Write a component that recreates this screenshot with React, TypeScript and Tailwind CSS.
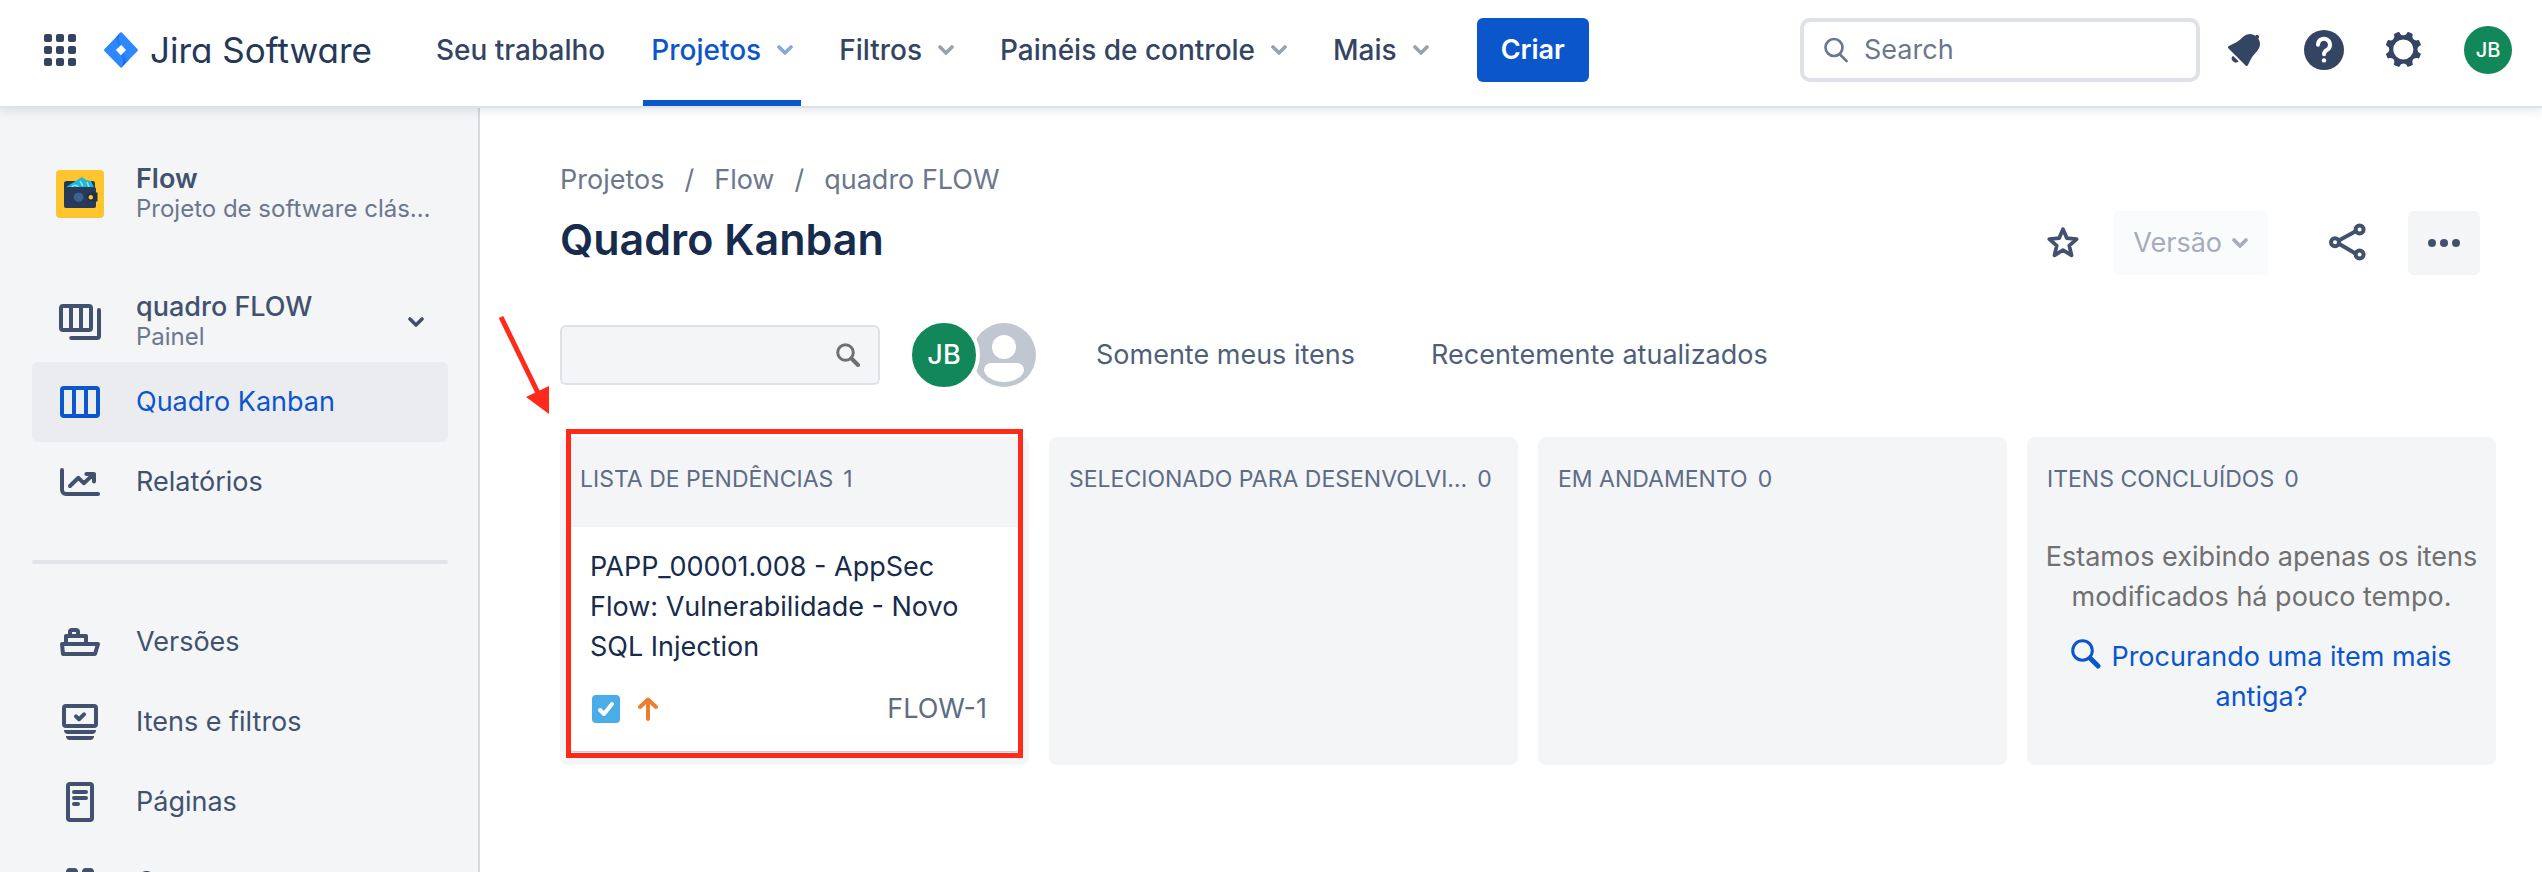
import type { ReactNode } from 'react';

const Svg = ({ children, className = 'size-12', box = '0 0 24 24' }: { children: ReactNode; className?: string; box?: string }) => (
  <svg viewBox={box} className={`shrink-0 ${className}`} fill="none" stroke="currentColor" strokeWidth={2} strokeLinecap="round" strokeLinejoin="round" aria-hidden="true">
    {children}
  </svg>
);

const Chevron = ({ className }: { className: string }) => (
  <Svg box="0 0 16 10" className={className}>
    <path d="M2 2l6 6 6-6" strokeWidth={3.6} />
  </Svg>
);

const AppGrid = () => (
  <svg viewBox="0 0 32 32" className="size-8" fill="currentColor" aria-hidden="true">
    {[0, 12, 24].map((y) => [0, 12, 24].map((x) => <rect key={`${x}-${y}`} x={x} y={y} width="8" height="8" rx="2" />))}
  </svg>
);

const JiraLogo = () => (
  <svg viewBox="0 0 34 36" className="h-9 w-[34px]" aria-hidden="true">
    <defs>
      <linearGradient id="jira-a" x1="0.9" y1="0.1" x2="0.4" y2="0.7">
        <stop offset="0.1" stopColor="#0f56cf" />
        <stop offset="1" stopColor="#2684ff" />
      </linearGradient>
      <linearGradient id="jira-b" x1="0.1" y1="0.9" x2="0.6" y2="0.3">
        <stop offset="0.1" stopColor="#0f56cf" />
        <stop offset="1" stopColor="#2684ff" />
      </linearGradient>
    </defs>
    <path fill="#2e87ff" d="M33.3 16.9L18.3.9 17 0 .6 16.9a1.6 1.6 0 0 0 0 2.3L17 36l16.3-16.8a1.6 1.6 0 0 0 0-2.3zM17 23.4L11.9 18 17 12.7l5.1 5.3z" />
    <path fill="url(#jira-a)" d="M17 12.7A9.4 9.4 0 0 1 17 0L11 6.500l3 9.300z" />
    <path fill="url(#jira-b)" d="M20 20.200L17 23.4a9.4 9.4 0 0 1 0 12.6l7.500-7.700z" />
  </svg>
);

const Bell = () => (
  <svg viewBox="0 0 24 24" className="size-12" fill="currentColor" aria-hidden="true">
    <path d="M6.485 17.669a2 2 0 002.829 0l-2.829-2.83a2 2 0 000 2.83zm4.897-12.191l-.725.725c-.782.782-2.21 1.813-3.206 2.311l-3.017 1.509c-.495.248-.584.774-.187 1.171l8.556 8.556c.398.396.922.313 1.171-.188l1.51-3.016c.494-.988 1.526-2.42 2.311-3.206l.725-.726a5.048 5.048 0 00.64-6.356 1.01 1.01 0 10-1.354-1.494c-.023.025-.046.049-.066.075a5.043 5.043 0 00-2.788-.84 5.036 5.036 0 00-3.57 1.478z" />
  </svg>
);

const Help = () => (
  <svg viewBox="0 0 24 24" className="size-12" fill="none" aria-hidden="true">
    <circle cx="12" cy="12" r="10" fill="currentColor" />
    <path d="M9 9.4a3 3 0 1 1 4.6 2.5c-1 .6-1.6 1-1.6 2.2" stroke="#fff" strokeWidth="2" strokeLinecap="round" />
    <circle cx="12" cy="17.2" r="1.1" fill="#fff" />
  </svg>
);

const Gear = () => (
  <svg viewBox="0 0 24 24" className="size-12" fill="currentColor" aria-hidden="true">
    <path d="M11.701 16.7a5.002 5.002 0 110-10.003 5.002 5.002 0 010 10.004m8.368-3.117a1.995 1.995 0 01-1.346-1.885c0-.876.563-1.613 1.345-1.885a.48.48 0 00.315-.574 8.947 8.947 0 00-.836-1.993.477.477 0 00-.598-.195 2.04 2.04 0 01-1.29.08 1.988 1.988 0 01-1.404-1.395 2.04 2.04 0 01.076-1.297.478.478 0 00-.196-.597 8.98 8.98 0 00-1.975-.826.479.479 0 00-.574.314 1.995 1.995 0 01-1.885 1.346 1.994 1.994 0 01-1.884-1.345.482.482 0 00-.575-.315c-.708.2-1.379.485-2.004.842a.47.47 0 00-.198.582A2.002 2.002 0 014.445 7.06a.478.478 0 00-.595.196 8.946 8.946 0 00-.833 1.994.48.48 0 00.308.572 1.995 1.995 0 011.323 1.877c0 .867-.552 1.599-1.324 1.877a.479.479 0 00-.308.57 8.99 8.99 0 00.723 1.79.477.477 0 00.624.194c.595-.273 1.343-.264 2.104.238.117.077.225.185.302.3.527.8.512 1.58.198 2.188a.473.473 0 00.168.628 8.946 8.946 0 002.11.897.474.474 0 00.57-.313 1.995 1.995 0 011.886-1.353c.878 0 1.618.567 1.887 1.353a.475.475 0 00.57.313 8.964 8.964 0 002.084-.883.473.473 0 00.167-.631c-.318-.608-.337-1.393.191-2.195.077-.116.185-.225.302-.302.772-.511 1.527-.513 2.125-.23a.477.477 0 00.628-.19 8.925 8.925 0 00.728-1.793.478.478 0 00-.314-.573" />
  </svg>
);

const Wallet = () => (
  <svg viewBox="0 0 48 48" className="size-12 shrink-0" aria-hidden="true">
    <rect width="48" height="48" rx="4" fill="#ffc42e" />
    <rect x="8" y="11" width="31" height="14" rx="2.5" fill="#1d3a4f" />
    <path d="M10 17l16-10 4 3 5 1 3 6v3H10z" fill="#1fb6d8" />
    <path d="M16 17a3.4 3.4 0 0 1 6 0M24 11l3 5M31 12l2 5" stroke="#8fe0ee" strokeWidth="1.6" fill="none" />
    <path d="M8 16l2 1h28a2 2 0 0 1 2 2v17a2 2 0 0 1-2 2H10a2 2 0 0 1-2-2z" fill="#283a57" />
    <circle cx="22.6" cy="27.2" r="4.8" fill="#3b6191" />
    <path d="M35 22.600h6.500v9H35a4.500 4.500 0 0 1 0-9z" fill="#1b3049" />
    <circle cx="34.800" cy="27.200" r="2.200" fill="#ffc42e" />
  </svg>
);

const Boards = () => (
  <Svg>
    <rect x="2.5" y="4" width="15" height="12" rx="1" />
    <path d="M7.500 4v12M12.500 4v12" strokeLinecap="butt" />
    <path d="M21.500 6v13a1 1 0 0 1-1 1H7.600" />
  </Svg>
);
const Board = () => (
  <Svg>
    <rect x="3" y="5" width="18" height="14" rx="1" />
    <path d="M9 5v14M15 5v14" strokeLinecap="butt" />
  </Svg>
);
const Report = () => (
  <Svg>
    <path d="M3 6v10a2 2 0 0 0 2 2h16" />
    <path d="M7 14l4.200-4.100 2.700 2.700 4.800-4.400M15.200 8h3.800v3.800" />
  </Svg>
);
const Ship = () => (
  <Svg>
    <path d="M3 13h18l-1.500 5H3.500z" />
    <path d="M5 13V9h10v4M7 9V7a1 1 0 0 1 1-1h2a1 1 0 0 1 1 1v2" />
  </Svg>
);
const Issues = () => (
  <Svg>
    <rect x="4" y="4" width="16" height="10" rx="1" />
    <path d="M10 9.200l1.500 1.400L14 8.200" />
    <path d="M4 16h16a2 2 0 0 1-2 2H6a2 2 0 0 1-2-2zM5 19h14a2 2 0 0 1-2 2H7a2 2 0 0 1-2-2z" fill="currentColor" stroke="none" />
  </Svg>
);
const Page = () => (
  <Svg>
    <rect x="6" y="3" width="12" height="18" rx="1" />
    <path d="M9 7h6M9 10h6M9 13h2" />
  </Svg>
);
const Components = () => (
  <Svg>
    <rect x="6" y="6" width="4" height="4" rx="1" />
    <rect x="14" y="6" width="4" height="4" rx="1" />
    <rect x="6" y="14" width="4" height="4" rx="1" />
    <rect x="14" y="14" width="4" height="4" rx="1" />
  </Svg>
);

const menus = [
  { label: 'Seu trabalho', menu: false, active: false },
  { label: 'Projetos', menu: true, active: true },
  { label: 'Filtros', menu: true, active: false },
  { label: 'Painéis de controle', menu: true, active: false },
  { label: 'Mais', menu: true, active: false },
];

function Header() {
  return (
    <header className="z-10 flex h-[106px] shrink-0 items-center bg-white pl-11 pr-[30px] text-[#344563] shadow-[0_2px_0_#dfe1e8,0_4px_10px_rgba(9,30,66,0.12)]">
      <button type="button" aria-label="Alternar aplicativo" className="mb-1.5"><AppGrid /></button>
      <a href="#" className="mb-1.5 ml-7 flex items-center gap-3 text-[35px] leading-[48px] text-[#253858] [font-feature-settings:'cv11']">
        <JiraLogo />
        Jira Software
      </a>
      <nav className="ml-14 flex h-full items-stretch gap-[30px] whitespace-nowrap text-[28px] font-medium">
        {menus.map((m) => (
          <button
            key={m.label}
            type="button"
            className={`flex items-center gap-4 border-b-[6px] px-2 ${m.active ? 'border-[#0c56cc] text-[#0c56cc]' : 'border-transparent'}`}
          >
            {m.label}
            {m.menu && <Chevron className="h-2.5 w-4 opacity-50" />}
          </button>
        ))}
      </nav>
      <button type="button" className="mb-1.5 ml-10 h-16 rounded-md bg-[#0c56cc] px-6 text-[27px] font-semibold text-white">Criar</button>
      <label className="mb-1.5 ml-auto flex h-16 w-[400px] items-center gap-4 rounded-[10px] border-4 border-[#dfe1e8] px-5 text-[#6b778c]">
        <Svg className="h-[26px] w-6" box="0 0 24 26">
          <circle cx="10" cy="10.500" r="8.500" strokeWidth={2.600} />
          <path d="M16 17.500l6.500 6.500" strokeWidth={2.600} />
        </Svg>
        <input type="search" aria-label="Search" placeholder="Search" className="w-full min-w-0 bg-transparent text-[27px] outline-none placeholder:text-[#6b778c]" />
      </label>
      <div className="mb-1.5 ml-5 flex items-center gap-8">
        <button type="button" aria-label="Notificações"><Bell /></button>
        <button type="button" aria-label="Ajuda"><Help /></button>
        <button type="button" aria-label="Configurações"><Gear /></button>
      </div>
      <button type="button" className="mb-1.5 ml-9 size-12 rounded-full bg-[#12875a] text-xl font-medium text-white">JB</button>
    </header>
  );
}

function NavItem({ icon, label, active = false }: { icon: ReactNode; label: string; active?: boolean }) {
  return (
    <a href="#" className={`flex h-20 shrink-0 items-center gap-8 rounded-md px-6 text-[27px] ${active ? 'bg-[#ebecf0] text-[#0c56cc]' : ''}`}>
      {icon}
      {label}
    </a>
  );
}

function Sidebar() {
  return (
    <aside className="flex w-[480px] shrink-0 flex-col overflow-hidden border-r-2 border-[#d8dade] bg-[#f4f5f7] pl-8 pr-[30px] pt-12 text-[#42526e]">
      <div className="flex h-20 shrink-0 items-center gap-8 px-6">
        <Wallet />
        <div className="min-w-0 flex-1 leading-[30px]">
          <h2 className="text-[27px] font-semibold">Flow</h2>
          <p className="whitespace-nowrap text-[24px] leading-[30px] text-[#6b778c]">Projeto de software clás…</p>
        </div>
      </div>
      <button type="button" className="mt-12 flex h-20 shrink-0 items-center gap-8 px-6 text-left">
        <Boards />
        <span className="flex flex-1 flex-col leading-[30px]">
          <span className="text-[27px] font-medium">quadro FLOW</span>
          <span className="text-[24px] leading-[30px] text-[#6b778c]">Painel</span>
        </span>
        <Chevron className="h-2.5 w-4" />
      </button>
      <NavItem icon={<Board />} label="Quadro Kanban" active />
      <NavItem icon={<Report />} label="Relatórios" />
      <hr className="my-[38px] h-1 shrink-0 rounded-sm border-0 bg-[#e2e4ea]" />
      <NavItem icon={<Ship />} label="Versões" />
      <NavItem icon={<Issues />} label="Itens e filtros" />
      <NavItem icon={<Page />} label="Páginas" />
      <NavItem icon={<Components />} label="Componentes" />
    </aside>
  );
}

function Column({ title, count, children }: { title: string; count: number; children?: ReactNode }) {
  return (
    <section className="relative min-w-0 rounded-lg bg-[#f4f5f7] px-2.5 pb-3">
      <h2 className="flex h-[90px] items-center gap-2.5 px-2.5 pb-1.5 text-[23px] text-[#5e6c84]">
        <span className="truncate">{title}</span>
        <span>{count}</span>
      </h2>
      {children}
    </section>
  );
}

export default function App() {
  return (
    <div className="flex h-screen flex-col overflow-hidden bg-white font-['Inter','Liberation_Sans',sans-serif]">
      <Header />
      <div className="flex min-h-0 flex-1">
        <Sidebar />
        <main className="min-w-0 flex-1 pl-20 pr-[46px] pt-[54px]">
          <nav aria-label="Trilha" className="flex gap-5 text-[27px] leading-10 text-[#6b778c]">
            <a href="#">Projetos</a>
            <span>/</span>
            <a href="#">Flow</a>
            <span>/</span>
            <a href="#">quadro FLOW</a>
          </nav>
          <div className="mr-4 mt-[11px] flex h-16 items-center text-[#42526e]">
            <h1 className="mb-2 flex-1 text-[43px] font-semibold leading-[56px] text-[#172b4d]">Quadro Kanban</h1>
            <button type="button" aria-label="Favoritar">
              <Svg className="size-9">
                <path d="M12 2.800l2.600 6 6.500.6-4.900 4.300 1.500 6.500L12 16.800l-5.700 3.400 1.500-6.500L2.900 9.400l6.500-.6z" strokeWidth={2.500} />
              </Svg>
            </button>
            <button type="button" disabled className="ml-8 flex h-16 items-center gap-2.5 rounded-md bg-[#fafbfc] px-5 text-[27px] text-[#a5adba]">
              Versão
              <Chevron className="h-2.5 w-4" />
            </button>
            <button type="button" aria-label="Compartilhar" className="ml-14">
              <Svg>
                <path d="M6 11.500L17 5.500M6 11.500L17 18" />
                <g fill="#fff">
                  <circle cx="5.500" cy="11.600" r="2" />
                  <circle cx="17.800" cy="5.300" r="2" />
                  <circle cx="17.800" cy="17.800" r="2" />
                </g>
              </Svg>
            </button>
            <button type="button" aria-label="Mais ações" className="ml-9 flex h-16 w-[72px] items-center justify-center rounded-md bg-[#f4f5f7]">
              <svg viewBox="0 0 32 8" className="h-2 w-8" fill="currentColor" aria-hidden="true">
                <circle cx="4" cy="4" r="4" />
                <circle cx="16" cy="4" r="4" />
                <circle cx="28" cy="4" r="4" />
              </svg>
            </button>
          </div>
          <div className="mt-12 flex items-center text-[27px] text-[#505f79]">
            <label className="flex h-[60px] w-80 items-center rounded-md border-2 border-[#dfe1e6] bg-[#f4f5f7] pl-3 pr-[18px] text-[#707070]">
              <input type="text" aria-label="Filtrar quadro" className="w-full min-w-0 bg-transparent outline-none" />
              <Svg className="size-6">
                <circle cx="9.500" cy="9.500" r="7.800" strokeWidth={3} />
                <path d="M15.500 15.500l6.500 6.500" strokeWidth={4} />
              </Svg>
            </label>
            <div className="ml-7 flex items-center">
              <button type="button" className="z-[1] -my-1 size-[72px] rounded-full border-4 border-white bg-[#12875a] font-medium text-white">JB</button>
              <button type="button" aria-label="Sem responsável" className="-ml-2">
                <svg viewBox="0 0 64 64" className="size-16" aria-hidden="true">
                  <circle cx="32" cy="32" r="32" fill="#c1c7d0" />
                  <circle cx="32" cy="24" r="12" fill="#fff" />
                  <path d="M19 40h26a7 7 0 0 1 7 7c0 5.500-9 12-20 12S12 52.500 12 47a7 7 0 0 1 7-7z" fill="#fff" />
                </svg>
              </button>
            </div>
            <button type="button" className="ml-[60px]">Somente meus itens</button>
            <button type="button" className="ml-[76px]">Recentemente atualizados</button>
          </div>
          <div className="relative mt-[50px] grid min-h-[328px] grid-cols-4 gap-5">
            <Column title="LISTA DE PENDÊNCIAS" count={1}>
              <article className="rounded-sm bg-white pb-6 pl-5 pr-8 pt-5 shadow-[0_1px_2px_rgba(9,30,66,0.25)]">
                <h3 className="text-[27px] leading-10 text-[#172b4d]">PAPP_00001.008 - AppSec Flow: Vulnerabilidade - Novo SQL Injection</h3>
                <div className="mt-6 flex items-center text-[#5e6c84]">
                  <svg viewBox="0 0 28 28" className="ml-0.5 size-7" aria-hidden="true">
                    <rect width="28" height="28" rx="4" fill="#4bade8" />
                    <path d="M8 15l4 4 8-10" fill="none" stroke="#fff" strokeWidth="4" strokeLinecap="round" strokeLinejoin="round" />
                  </svg>
                  <svg viewBox="0 0 20 24" className="ml-[18px] h-6 w-5 text-[#e97f33]" fill="none" stroke="currentColor" strokeWidth="4" strokeLinecap="round" strokeLinejoin="round" aria-hidden="true">
                    <path d="M10 22V3M2 10l8-7.500 8 7.500" />
                  </svg>
                  <a href="#" className="ml-auto text-[27px] leading-9">FLOW-1</a>
                </div>
              </article>
              <div className="pointer-events-none absolute -top-2 bottom-[7px] left-1.5 right-1.5 border-[5px] border-[#ff2a1b]" />
            </Column>
            <Column title="SELECIONADO PARA DESENVOLVI…" count={0} />
            <Column title="EM ANDAMENTO" count={0} />
            <Column title="ITENS CONCLUÍDOS" count={0}>
              <div className="pt-2.5 text-center text-[27px] leading-10">
                <p className="-mx-2 text-[#707070]">Estamos exibindo apenas os itens modificados há pouco tempo.</p>
                <a href="#" className="mx-6 mt-5 block text-[#0c56cc]">
                  <Svg className="mr-2.5 inline-block size-[30px] align-[-3px]" box="0 0 30 30">
                    <circle cx="11.500" cy="11.500" r="9.800" strokeWidth={3} />
                    <path d="M19.500 19.500l7.500 7.500" strokeWidth={5} />
                  </Svg>
                  Procurando uma item mais antiga?
                </a>
              </div>
            </Column>
            <svg viewBox="0 0 54 100" className="pointer-events-none absolute -left-[64px] -top-[122px] h-[100px] w-[54px]" aria-hidden="true">
              <path d="M5 2l38 78" stroke="#ff2a1b" strokeWidth="5" />
              <path d="M53 99L30 82l23-11z" fill="#ff2a1b" />
            </svg>
          </div>
        </main>
      </div>
    </div>
  );
}
